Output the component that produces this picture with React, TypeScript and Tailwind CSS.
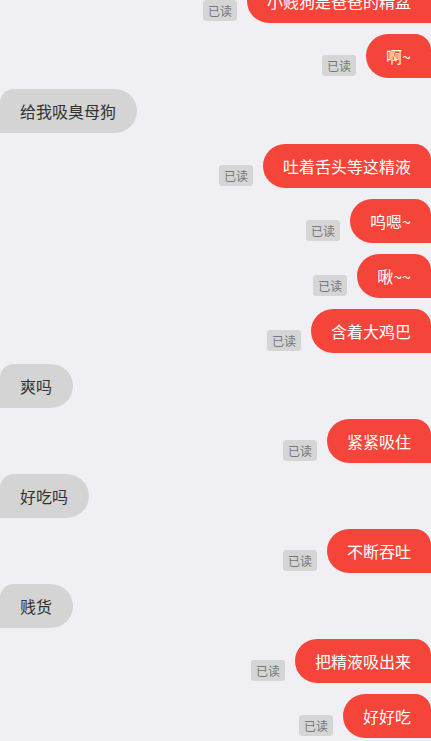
import React from "react";

type Msg = { text: string; me: boolean };

const MSGS: Msg[] = [
  { text: "小贱狗是爸爸的精盆", me: true },
  { text: "啊~", me: true },
  { text: "给我吸臭母狗", me: false },
  { text: "吐着舌头等这精液", me: true },
  { text: "呜嗯~", me: true },
  { text: "啾~~", me: true },
  { text: "含着大鸡巴", me: true },
  { text: "爽吗", me: false },
  { text: "紧紧吸住", me: true },
  { text: "好吃吗", me: false },
  { text: "不断吞吐", me: true },
  { text: "贱货", me: false },
  { text: "把精液吸出来", me: true },
  { text: "好好吃", me: true },
];

export default function App() {
  return (
    <div
      className="w-[431px] h-[741px] overflow-hidden bg-[#efeff4]"
      style={{ fontFamily: '"Noto Sans CJK SC", "Liberation Sans", sans-serif' }}
    >
      <div className="flex flex-col gap-[11px] mt-[-21px]">
        {MSGS.map((m, i) =>
          m.me ? (
            <div key={i} className="flex justify-end items-end">
              <span className="mr-[10px] mb-[2px] h-[21px] px-[5px] flex items-center rounded-[3px] bg-[#d5d5d5] text-[12px] text-[#777]">
                已读
              </span>
              <div className="h-[44px] flex items-center px-5 bg-[#f5443a] text-white text-[16px] rounded-tl-[22px] rounded-bl-[22px] rounded-tr-[16px]">
                {m.text}
              </div>
            </div>
          ) : (
            <div key={i} className="flex justify-start">
              <div className="h-[44px] flex items-center pl-5 pr-[21px] bg-[#d4d4d4] text-[#333] text-[16px] rounded-tr-[22px] rounded-br-[22px] rounded-tl-[14px]">
                {m.text}
              </div>
            </div>
          )
        )}
      </div>
    </div>
  );
}
